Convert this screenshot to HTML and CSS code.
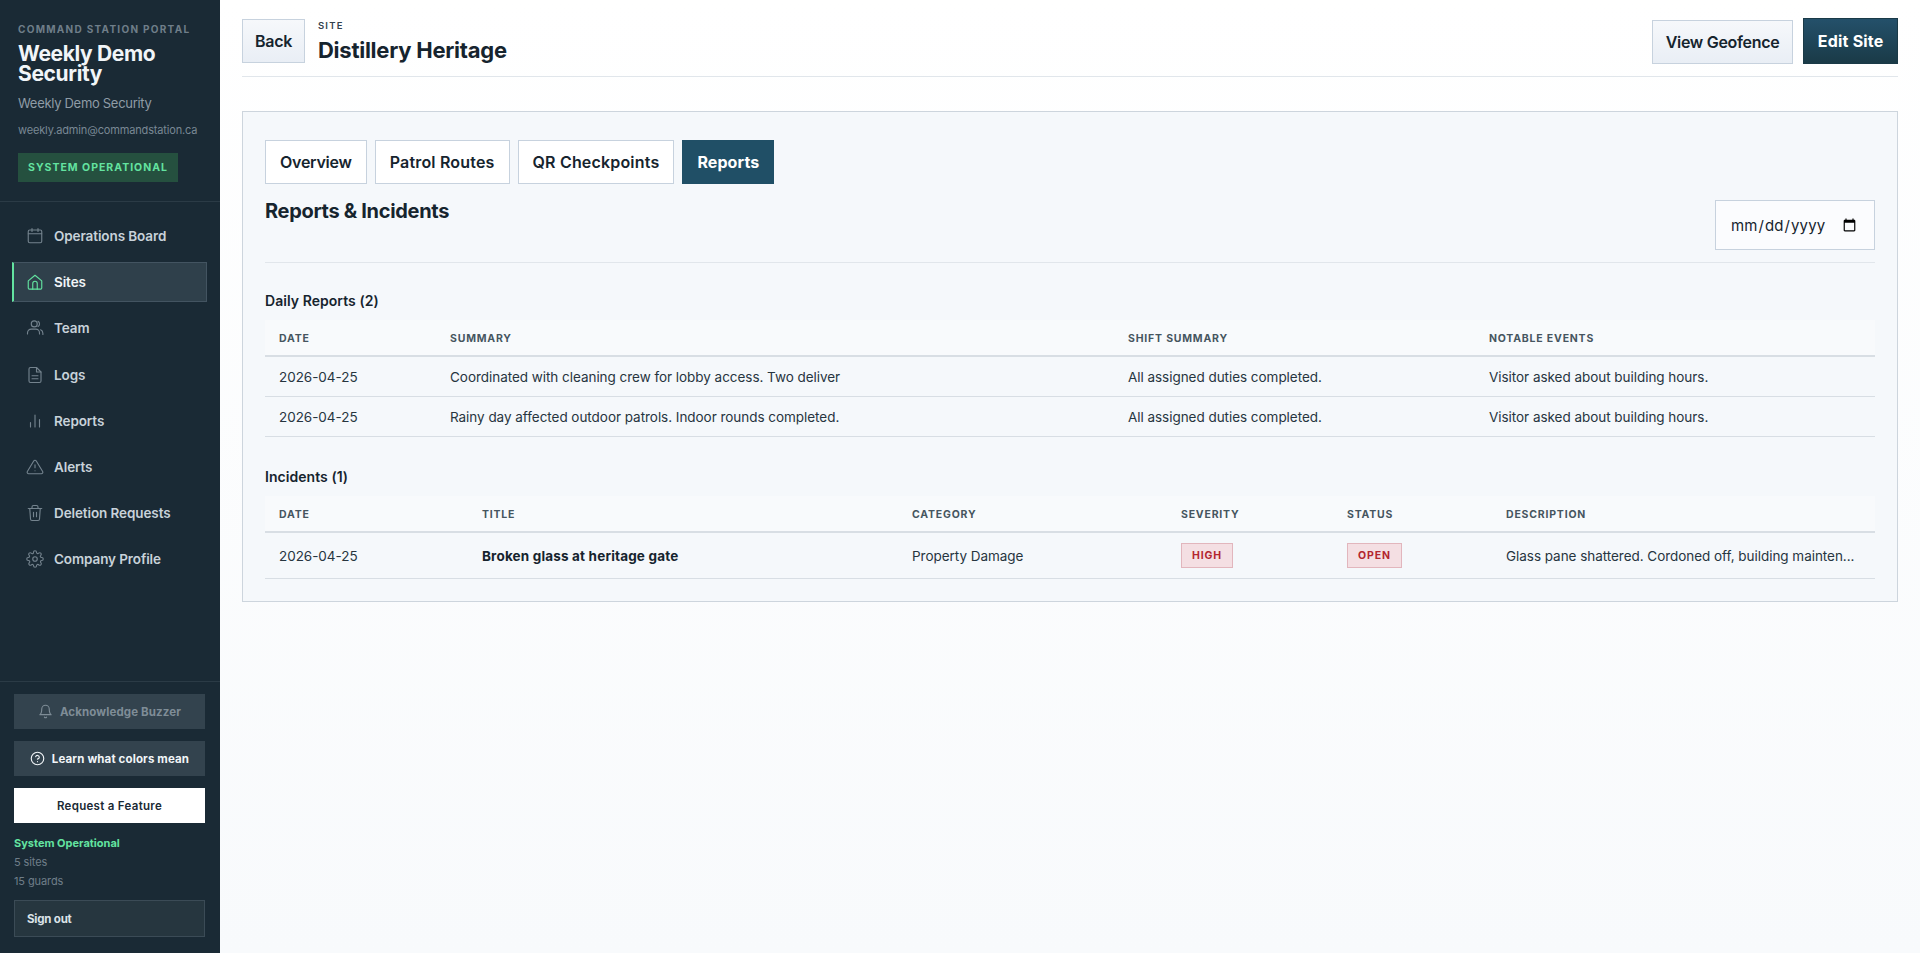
FILE: index.html
```html
<!DOCTYPE html>
<html lang="en">
<head>
<meta charset="utf-8">
<title>Distillery Heritage</title>
<link rel="stylesheet" href="styles.css">
</head>
<body>
<div class="app">
  <aside class="sidebar">
    <div class="brand">
      <div class="brand-kicker">COMMAND STATION PORTAL</div>
      <div class="brand-name">Weekly Demo Security</div>
      <div class="brand-sub">Weekly Demo Security</div>
      <div class="brand-mail">weekly.admin@commandstation.ca</div>
      <div class="brand-badge">SYSTEM OPERATIONAL</div>
    </div>
    <nav class="nav">
      <a class="nav-item"><svg class="ico" viewBox="0 0 24 24"><rect x="3" y="4" width="18" height="17" rx="2"/><path d="M16 2v4M8 2v4M3 9h18"/></svg>Operations Board</a>
      <a class="nav-item active"><svg class="ico" viewBox="0 0 24 24"><path d="M3 10.5 12 3l9 7.5V20a1.5 1.5 0 0 1-1.5 1.5h-15A1.5 1.5 0 0 1 3 20z"/><path d="M9 21.5V14a3 3 0 0 1 6 0v7.5"/></svg>Sites</a>
      <a class="nav-item"><svg class="ico" viewBox="0 0 24 24"><circle cx="11" cy="6.5" r="4"/><path d="M2 20v-1.5a5 5 0 0 1 5-5h6a5 5 0 0 1 5 5V20M16 3a4 4 0 0 1 0 7M22.5 20.5v-1.5a5 5 0 0 0-3-4.6"/></svg>Team</a>
      <a class="nav-item"><svg class="ico" viewBox="0 0 24 24"><path d="M14 2H6a2 2 0 0 0-2 2v16a2 2 0 0 0 2 2h12a2 2 0 0 0 2-2V8z"/><path d="M14 2v6h6M8 13h8M8 17h8"/></svg>Logs</a>
      <a class="nav-item"><svg class="ico" viewBox="0 0 24 24"><path d="M18 20V10M12 20V4M6 20v-6"/></svg>Reports</a>
      <a class="nav-item"><svg class="ico" viewBox="0 0 24 24"><path d="M10.3 3.9 1.8 18a2 2 0 0 0 1.7 3h17a2 2 0 0 0 1.7-3L13.7 3.9a2 2 0 0 0-3.4 0z"/><path d="M12 9v4M12 17h.01"/></svg>Alerts</a>
      <a class="nav-item"><svg class="ico" viewBox="0 0 24 24"><path d="M3 6h18M8 6V4a2 2 0 0 1 2-2h4a2 2 0 0 1 2 2v2M19 6l-1 14a2 2 0 0 1-2 2H8a2 2 0 0 1-2-2L5 6M10 11v6M14 11v6"/></svg>Deletion Requests</a>
      <a class="nav-item"><svg class="ico" viewBox="0 0 24 24"><circle cx="12" cy="12" r="3"/><path d="M19.4 15a1.65 1.65 0 0 0 .33 1.82l.06.06a2 2 0 1 1-2.83 2.83l-.06-.06a1.65 1.65 0 0 0-2.82 1.17V21a2 2 0 1 1-4 0v-.09a1.65 1.65 0 0 0-2.82-1.17l-.06.06a2 2 0 1 1-2.83-2.83l.06-.06A1.65 1.65 0 0 0 3.09 14H3a2 2 0 1 1 0-4h.09a1.65 1.65 0 0 0 1.17-2.82l-.06-.06a2 2 0 1 1 2.83-2.83l.06.06A1.65 1.65 0 0 0 10 3.09V3a2 2 0 1 1 4 0v.09a1.65 1.65 0 0 0 2.82 1.17l.06-.06a2 2 0 1 1 2.83 2.83l-.06.06A1.65 1.65 0 0 0 20.91 10H21a2 2 0 1 1 0 4h-.09a1.65 1.65 0 0 0-1.51 1z"/></svg>Company Profile</a>
    </nav>
    <div class="side-foot">
      <button class="side-btn muted"><svg class="ico-sm" viewBox="0 0 24 24"><path d="M18 8a6 6 0 0 0-12 0c0 7-3 9-3 9h18s-3-2-3-9M13.7 21a2 2 0 0 1-3.4 0"/></svg>Acknowledge Buzzer</button>
      <button class="side-btn"><svg class="ico-sm" viewBox="0 0 24 24"><circle cx="12" cy="12" r="10"/><path d="M9.1 9a3 3 0 0 1 5.8 1c0 2-3 3-3 3M12 17h.01"/></svg>Learn what colors mean</button>
      <button class="side-btn light">Request a Feature</button>
      <div class="foot-status">System Operational</div>
      <div class="foot-meta">5 sites</div>
      <div class="foot-meta">15 guards</div>
      <button class="signout">Sign out</button>
    </div>
  </aside>
  <main class="main">
    <header class="topbar">
      <div class="top-left">
        <button class="btn back">Back</button>
        <div class="title-wrap">
          <div class="kicker">SITE</div>
          <h1 class="site-title">Distillery Heritage</h1>
        </div>
      </div>
      <div class="top-right">
        <button class="btn">View Geofence</button>
        <button class="btn primary">Edit Site</button>
      </div>
    </header>
    <section class="panel">
      <div class="tabs">
        <button class="tab first">Overview</button>
        <button class="tab">Patrol Routes</button>
        <button class="tab">QR Checkpoints</button>
        <button class="tab on">Reports</button>
      </div>
      <div class="panel-head">
        <h2 class="panel-title">Reports &amp; Incidents</h2>
        <input class="date" type="date">
      </div>
      <h3 class="sub-title">Daily Reports (2)</h3>
      <table class="grid">
        <thead>
          <tr><th class="d1">DATE</th><th class="d2">SUMMARY</th><th class="d3">SHIFT SUMMARY</th><th>NOTABLE EVENTS</th></tr>
        </thead>
        <tbody>
          <tr><td>2026-04-25</td><td>Coordinated with cleaning crew for lobby access. Two deliver</td><td>All assigned duties completed.</td><td>Visitor asked about building hours.</td></tr>
          <tr><td>2026-04-25</td><td>Rainy day affected outdoor patrols. Indoor rounds completed.</td><td>All assigned duties completed.</td><td>Visitor asked about building hours.</td></tr>
        </tbody>
      </table>
      <h3 class="sub-title second">Incidents (1)</h3>
      <table class="grid">
        <thead>
          <tr><th class="i1">DATE</th><th class="i2">TITLE</th><th class="i3">CATEGORY</th><th class="i4">SEVERITY</th><th class="i5">STATUS</th><th>DESCRIPTION</th></tr>
        </thead>
        <tbody>
          <tr class="tall"><td>2026-04-25</td><td class="strong">Broken glass at heritage gate</td><td>Property Damage</td><td><span class="tag">HIGH</span></td><td><span class="tag">OPEN</span></td><td>Glass pane shattered. Cordoned off, building mainten...</td></tr>
        </tbody>
      </table>
    </section>
  </main>
</div>
</body>
</html>
```

FILE: styles.css
```css
* { box-sizing: border-box; }
html, body { margin: 0; height: 100%; }
body { font-family: Inter, "Liberation Sans", sans-serif; color: #16242e; background: #fff; }
button { font-family: inherit; cursor: pointer; }
.app { display: flex; height: 953px; overflow: hidden; }

.sidebar { width: 220px; flex: none; display: flex; flex-direction: column; background: #1a2a35; }
.brand { padding: 24px 18px 18px; height: 202px; border-bottom: 1px solid #2b3b46; }
.brand-kicker { font-size: 10px; line-height: 10px; font-weight: 700; letter-spacing: 1.28px; color: #6f7e89; }
.brand-name { margin-top: 10px; font-size: 21px; line-height: 20px; font-weight: 700; letter-spacing: -0.35px; color: #f1f5f8; }
.brand-sub { margin-top: 10px; font-size: 13px; line-height: 18px; letter-spacing: -0.3px; color: #8f9ca6; }
.brand-mail { margin-top: 10px; font-size: 11px; line-height: 16px; letter-spacing: -0.15px; color: #798894; }
.brand-badge { margin-top: 15px; width: 160px; height: 29px; display: flex; align-items: center; justify-content: center; background: #25503f; color: #63e3a0; font-size: 10.5px; font-weight: 700; letter-spacing: 1px; }

.nav { padding: 14px 12px 0 12px; display: flex; flex-direction: column; gap: 6.2px; }
.nav-item { height: 40px; display: flex; align-items: center; gap: 10px; padding-left: 12px; margin-right: 1px; font-size: 13.5px; font-weight: 600; letter-spacing: -0.1px; color: #c8d2da; border: 1px solid transparent; border-left-width: 2px; }
.nav-item.active { background: #2f404b; border-color: #435461; border-left-color: #63e3a0; color: #f1f5f8; }
.ico { width: 18px; height: 18px; flex: none; fill: none; stroke: #74838e; stroke-width: 1.5; stroke-linecap: round; stroke-linejoin: round; }
.active .ico { stroke: #63e3a0; }

.side-foot { margin-top: auto; padding: 12px 15px 16px 14px; border-top: 1px solid #2b3b46; display: flex; flex-direction: column; }
.side-btn { height: 35px; margin-bottom: 12px; display: flex; align-items: center; justify-content: center; gap: 7px; border: 0; background: #33434e; color: #f1f5f8; font-size: 11.5px; font-weight: 700; letter-spacing: 0.13px; }
.side-btn.muted { color: #7f8d97; }
.side-btn.muted .ico-sm { stroke: #7f8d97; }
.side-btn.light { background: #fff; color: #1a2a35; font-weight: 600; letter-spacing: 0.3px; margin-bottom: 11px; }
.ico-sm { width: 15px; height: 15px; fill: none; stroke: #f1f5f8; stroke-width: 1.8; stroke-linecap: round; stroke-linejoin: round; }
.foot-status { font-size: 11px; line-height: 19px; font-weight: 700; letter-spacing: 0; color: #63e3a0; }
.foot-meta { font-size: 11px; line-height: 19px; letter-spacing: -0.1px; color: #6f7e89; }
.signout { margin-top: 9px; height: 37px; padding-left: 12px; text-align: left; background: #26363f; border: 1px solid #3b4b56; color: #dbe3e9; font-size: 11.5px; font-weight: 700; letter-spacing: -0.2px; }

.main { flex: 1; min-width: 0; padding: 18px 22px 0; background: linear-gradient(180deg, #fff 0%, #f8fafc 100%); }
.topbar { display: flex; justify-content: space-between; align-items: flex-start; height: 59px; border-bottom: 1px solid #e1e6eb; }
.top-left { display: flex; gap: 13px; }
.top-right { display: flex; gap: 10px; align-items: center; }
.btn { height: 44px; margin-top: 1px; padding: 0 13px; background: linear-gradient(180deg, #f6f8fb, #e9eef5); border: 1px solid #c7d2de; color: #16242e; font-size: 16px; font-weight: 600; letter-spacing: -0.3px; }
.btn.back { padding: 0 12px; }
.btn.primary { height: 46px; margin-top: 0; padding: 0 13.5px; background: linear-gradient(180deg, #24506a, #1a3a47); border-color: #1a3a47; color: #fff; font-weight: 700; letter-spacing: 0.2px; }
.kicker { margin-top: 2px; font-size: 9.5px; line-height: 11px; font-weight: 600; letter-spacing: 1.2px; color: #33424d; }
.site-title { margin: 6px 0 0; font-size: 22px; line-height: 26px; font-weight: 700; letter-spacing: -0.25px; color: #16242e; }

.panel { margin-top: 34px; padding: 28px 22px 22px; height: 491px; border: 1px solid #cdd5dd; background: #f5f8fb; }
.tabs { display: flex; gap: 8px; }
.tab { height: 44px; padding: 0 14px; background: #fff; border: 1px solid #c7d2de; color: #16242e; font-size: 16px; font-weight: 600; letter-spacing: 0.18px; }
.tab.first { letter-spacing: -0.25px; }
.tab.on { background: #204f66; border-color: #204f66; color: #fff; font-weight: 700; letter-spacing: 0.1px; }
.panel-head { display: flex; justify-content: space-between; align-items: flex-start; height: 79px; padding-top: 16px; border-bottom: 1px solid #e1e6eb; }
.panel-title { margin: 0; font-size: 20px; line-height: 22px; font-weight: 700; letter-spacing: -0.32px; color: #16242e; }
.date { width: 160px; height: 50px; padding: 0 15px 0 14px; border: 1px solid #c7d2de; background: #fbfcfe; font-family: inherit; font-size: 15px; letter-spacing: 0.1px; color: #16242e; border-radius: 0; }

.sub-title { margin: 28px 0 0; height: 19px; font-size: 14px; line-height: 19px; font-weight: 600; letter-spacing: 0.05px; color: #16242e; }
.sub-title.second { margin-top: 30px; }
.grid { width: 100%; margin-top: 10px; border-collapse: separate; border-spacing: 0; table-layout: fixed; }
th { height: 37px; padding: 1px 14px 0; text-align: left; background: #f8fafc; border-bottom: 2px solid #d8dee4; font-size: 10.5px; font-weight: 700; letter-spacing: 0.8px; color: #46555f; }
td { height: 40px; padding: 0 14px; font-size: 13.5px; letter-spacing: -0.04px; color: #27353f; border-bottom: 1px solid #d8dee4; white-space: nowrap; overflow: hidden; }
.tall td { height: 46px; }
.d1 { width: 171px; } .d2 { width: 678px; } .d3 { width: 361px; }
.i1 { width: 203px; } .i2 { width: 430px; } .i3 { width: 269px; } .i4 { width: 166px; } .i5 { width: 159px; }
td.strong { font-weight: 700; letter-spacing: 0.17px; color: #16242e; }
.tag { display: inline-flex; align-items: center; height: 25px; padding: 0 10px; background: #f4dfe3; border: 1px solid #e2b6bd; color: #b3262f; font-size: 10.5px; font-weight: 700; letter-spacing: 0.9px; }
```
